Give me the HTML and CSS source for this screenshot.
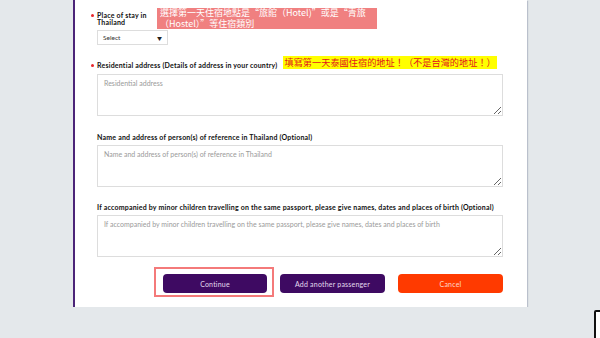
FILE: index.html
```html
<!DOCTYPE html>
<html lang="zh-Hant">
<head>
    <meta charset="UTF-8">
    <meta name="viewport" content="width=device-width, initial-scale=1.0">
    <title>Arrival card - accommodation</title>
    <link rel="stylesheet" href="styles.css">
</head>
<body>
    <div class="card">
        <div class="field field-stay">
            <div class="field-head">
                <label class="required narrow" for="stay">Place of stay in Thailand</label>
                <span class="note note-pink">選擇第一天住宿地點是“旅館（Hotel)”或是“青旅<br>（Hostel）”等住宿類別</span>
            </div>
            <div class="select" id="stay">
                <span>Select</span>
                <span class="caret">&#9660;</span>
            </div>
        </div>

        <div class="field field-address">
            <div class="field-head head-end">
                <label class="required" for="address">Residential address (Details of address in your country)</label>
                <span class="note note-yellow">填寫第一天泰國住宿的地址！（不是台灣的地址！）</span>
            </div>
            <textarea id="address" placeholder="Residential address"></textarea>
        </div>

        <div class="field">
            <label for="reference">Name and address of person(s) of reference in Thailand (Optional)</label>
            <textarea id="reference" placeholder="Name and address of person(s) of reference in Thailand"></textarea>
        </div>

        <div class="field">
            <label for="children">If accompanied by minor children travelling on the same passport, please give names, dates and places of birth (Optional)</label>
            <textarea id="children" placeholder="If accompanied by minor children travelling on the same passport, please give names, dates and places of birth"></textarea>
        </div>

        <div class="actions">
            <button class="btn btn-purple marked">Continue</button>
            <button class="btn btn-purple">Add another passenger</button>
            <button class="btn btn-cancel">Cancel</button>
        </div>
    </div>
    <div class="corner-box"></div>
</body>
</html>
```

FILE: styles.css
```css
body {
    margin: 0;
    background-color: #e4e8eb;
    font-family: Lato, "Noto Sans CJK TC", sans-serif;
}
.card {
    box-sizing: border-box;
    width: 454px;
    margin-left: 73px;
    padding: 8px 24px 14px 22px;
    background-color: white;
    border-left: 2px solid #4b2478;
    box-shadow: 1px 1px 1px rgba(60, 70, 110, 0.25);
}
.field {
    display: flex;
    flex-direction: column;
    gap: 4px;
    margin-bottom: 17px;
}
.field-stay {
    margin-bottom: 11px;
}
.field-address {
    margin-bottom: 18px;
}
.field-head {
    display: flex;
    align-items: flex-start;
    gap: 5px;
}
.head-end {
    align-items: flex-end;
    margin-bottom: 1px;
}
label {
    font-size: 7px;
    font-weight: bold;
    letter-spacing: 0.2px;
    color: #111;
    line-height: 7px;
}
.narrow {
    width: 55px;
    margin-top: 4px;
}
.required::before {
    content: "";
    display: inline-block;
    width: 3px;
    height: 3px;
    margin-left: -6px;
    margin-right: 3px;
    border-radius: 50%;
    background-color: #e8262b;
    vertical-align: 1px;
}
.note {
    font-family: "Noto Sans CJK TC", sans-serif;
    font-size: 9px;
    line-height: 10.5px;
    padding: 0 3px;
}
.note-pink {
    width: 214px;
    background-color: #f08080;
    color: white;
}
.note-yellow {
    margin-left: 1px;
    padding: 2px 1px;
    font-size: 9.2px;
    line-height: 9px;
    background-color: #ffff00;
    color: #e2141c;
}
.select {
    box-sizing: border-box;
    width: 71px;
    height: 15px;
    margin-top: -3px;
    padding: 0 5px;
    display: flex;
    align-items: center;
    justify-content: space-between;
    border: 1px solid #dddddd;
    font-size: 6.5px;
    color: #333;
}
.caret {
    font-size: 5px;
    color: #222;
}
textarea {
    box-sizing: border-box;
    width: 406px;
    height: 42px;
    padding: 4px 6px;
    border: 1px solid #dddddd;
    border-radius: 0;
    font-family: Lato, sans-serif;
    font-size: 7px;
    color: #333;
}
textarea::placeholder {
    color: #9a9a9a;
}
.actions {
    display: flex;
    justify-content: flex-end;
    gap: 13px;
    margin-top: 2px;
}
.btn {
    width: 105px;
    height: 19px;
    border: none;
    border-radius: 4px;
    font-family: Lato, sans-serif;
    font-size: 7px;
    letter-spacing: 0.2px;
    color: #e4dcef;
}
.btn-purple {
    background-color: #3e0a62;
}
.btn-cancel {
    background-color: #ff3a00;
    color: #ffd9cc;
}
.marked {
    position: relative;
    width: 104px;
}
.marked::after {
    content: "";
    position: absolute;
    top: -7px;
    right: -7px;
    bottom: -4px;
    left: -9px;
    border: 2px solid #f47a7a;
}
.corner-box {
    position: fixed;
    left: 594px;
    top: 310px;
    width: 20px;
    height: 40px;
    background-color: white;
    border: 2px solid #111;
    border-radius: 2px;
}
```
